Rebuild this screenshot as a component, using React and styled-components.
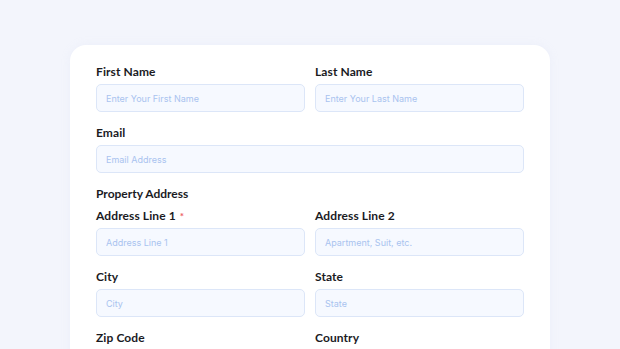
import React from "react";
import styled, { createGlobalStyle } from "styled-components";

const GlobalStyle = createGlobalStyle`
  html, body {
    margin: 0;
    padding: 0;
    background: #f3f5fc;
    height: 100%;
    overflow: hidden;
  }
  body {
    font-family: "Lato", "Open Sans", sans-serif;
  }
`;

const Page = styled.div`
  padding: 45px 70px 0 70px;
  height: 349px;
  box-sizing: border-box;
  overflow: hidden;
`;

const Card = styled.form`
  background: #ffffff;
  border-radius: 16px;
  padding: 19px 26px 40px;
  display: flex;
  flex-direction: column;
  gap: 13px;
  box-shadow: 0 0 10px rgba(200, 210, 235, 0.15);
`;

const Row = styled.div`
  display: grid;
  grid-template-columns: ${(p) => (p.$single ? "1fr" : "1fr 1fr")};
  column-gap: 10px;
`;

const Field = styled.label`
  display: flex;
  flex-direction: column;
  gap: 4px;
`;

const Label = styled.span`
  font-size: 12px;
  line-height: 16px;
  font-weight: 700;
  color: #1b1b1f;
  letter-spacing: 0.1px;
`;

const Section = styled.div`
  font-size: 12px;
  line-height: 16px;
  font-weight: 700;
  color: #1b1b1f;
  margin-bottom: -7px;
`;

const Required = styled.span`
  color: #ec5b66;
  font-size: 10px;
  margin-left: 4px;
  vertical-align: top;
`;

const Input = styled.input`
  box-sizing: border-box;
  height: 28px;
  width: 100%;
  border: 1px solid #dce6f8;
  border-radius: 5px;
  background: #f6f9ff;
  padding: 0 9px;
  font-family: "Inter", "Liberation Sans", sans-serif;
  font-size: 9px;
  color: #333;
  outline: none;
  &::placeholder {
    color: #a9c3ef;
  }
`;

const TextField = ({ label, placeholder, required }) => (
  <Field>
    <Label>
      {label}
      {required && <Required>*</Required>}
    </Label>
    <Input placeholder={placeholder} />
  </Field>
);

export default function App() {
  return (
    <>
      <GlobalStyle />
      <Page>
        <Card>
          <Row>
            <TextField label="First Name" placeholder="Enter Your First Name" />
            <TextField label="Last Name" placeholder="Enter Your Last Name" />
          </Row>
          <Row $single>
            <TextField label="Email" placeholder="Email Address" />
          </Row>
          <Section>Property Address</Section>
          <Row>
            <TextField label="Address Line 1" placeholder="Address Line 1" required />
            <TextField label="Address Line 2" placeholder="Apartment, Suit, etc." />
          </Row>
          <Row>
            <TextField label="City" placeholder="City" />
            <TextField label="State" placeholder="State" />
          </Row>
          <Row>
            <TextField label="Zip Code" placeholder="Zip Code" />
            <TextField label="Country" placeholder="Country" />
          </Row>
        </Card>
      </Page>
    </>
  );
}
